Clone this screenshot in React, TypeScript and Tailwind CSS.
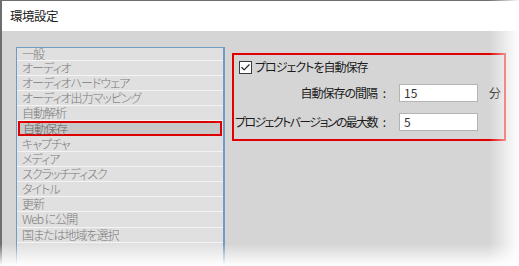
import { Check } from "lucide-react";

const items = [
    "一般",
    "オーディオ",
    "オーディオハードウェア",
    "オーディオ出力マッピング",
    "自動解析",
    "自動保存",
    "キャプチャ",
    "メディア",
    "スクラッチディスク",
    "タイトル",
    "更新",
    "Web に公開",
    "国または地域を選択",
];

const font = "font-['Noto_Sans_CJK_JP','Noto_Sans',sans-serif] [font-feature-settings:'palt']";

const Preferences = () => {
    return (
        <div className={`relative w-[519px] h-[266px] bg-white overflow-hidden ${font}`}>
            <div className="flex flex-col h-full border-l-2 border-t border-[#6e6e6e]">
                {/* title bar */}
                <div className="h-[30px] bg-white flex items-center pl-[8px] text-[12.5px] tracking-[-0.5px] text-[#1a1a1a]">
                    環境設定
                </div>

                <div className="flex-1 bg-[#d5d5d5] flex pl-[14px] pt-[16px]">
                    {/* category list */}
                    <div className="w-[209px] border border-r-2 border-[#6f9cc4] bg-[#e0e0e0] flex flex-col font-light">
                        {items.map((item, i) =>
                            item === "自動保存" ? (
                                <div
                                    key={item}
                                    className="h-[15.2px] mx-[1px] border-2 border-[#dd0000] bg-[#c8c8c8] flex items-center pl-[3px] text-[12px] tracking-[-1px] leading-none text-[#666]"
                                >
                                    {item}
                                </div>
                            ) : (
                                <div
                                    key={item}
                                    className={`${i === 0 ? "h-[12.5px]" : "h-[15.2px]"} border-b border-[#f3f3f3] flex items-center pl-[5px] text-[12px] tracking-[-1px] leading-none text-[#7a7a7a]`}
                                >
                                    {item}
                                </div>
                            )
                        )}
                    </div>

                    {/* autosave settings */}
                    <div className="ml-[7px] mt-[6px] w-[274px] h-[88px] border-2 border-[#e10000] flex flex-col text-[12px] tracking-[-1px] text-[#1c1c1c]">
                        <label className="flex items-center gap-[3px] pl-[5px] pt-[4px] h-[20px]">
                            <span className="w-[13px] h-[13px] border border-[#3a3a3a] bg-white flex items-center justify-center">
                                <Check className="w-[11px] h-[11px] text-[#222]" strokeWidth={2.5} />
                            </span>
                            プロジェクトを自動保存
                        </label>
                        <div className="flex items-center mt-[9px] h-[18px]">
                            <span className="w-[143px] text-right whitespace-nowrap">自動保存の間隔</span>
                            <span className="w-[14px] text-center">:</span>
                            <div className="ml-[8px] w-[79px] h-[18px] bg-white border border-[#b4b4b4] flex items-center pl-[4px] tracking-normal text-[#333]">
                                15
                            </div>
                            <span className="ml-[11px]">分</span>
                        </div>
                        <div className="flex items-center mt-[11px] h-[18px]">
                            <span className="w-[143px] text-right whitespace-nowrap tracking-[-1.6px]">プロジェクトバージョンの最大数</span>
                            <span className="w-[14px] text-center">:</span>
                            <div className="ml-[8px] w-[79px] h-[18px] bg-white border border-[#b4b4b4] flex items-center pl-[4px] tracking-normal text-[#333]">
                                5
                            </div>
                        </div>
                    </div>
                </div>
            </div>

            {/* faded edges */}
            <div className="absolute top-0 right-0 h-full w-[30px] bg-linear-to-r from-transparent to-white" />
            <div className="absolute bottom-0 left-0 w-full h-[22px] bg-linear-to-b from-transparent to-white" />
        </div>
    );
};

export default function App() {
    return <Preferences />;
}
